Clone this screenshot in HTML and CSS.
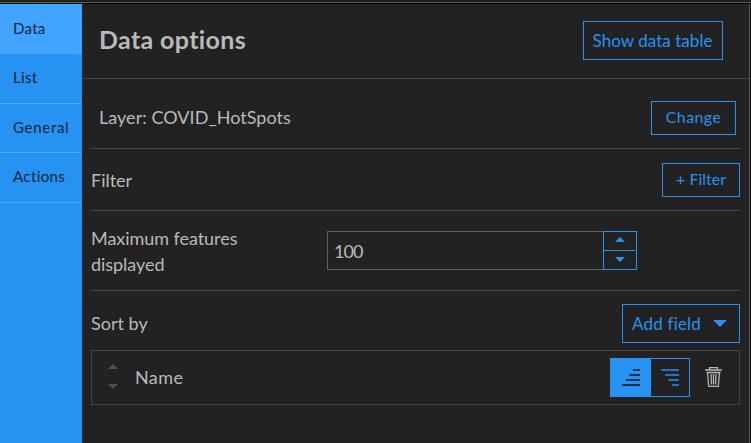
FILE: index.html
```
<!DOCTYPE html>
<html lang="en">
<head>
<meta charset="utf-8">
<title>Data options</title>
<link rel="stylesheet" href="styles.css">
</head>
<body>
<div class="window">
  <nav class="tabs">
    <a class="tab active">Data</a>
    <a class="tab">List</a>
    <a class="tab general">General</a>
    <a class="tab actions">Actions</a>
  </nav>
  <main class="panel">
    <header class="header">
      <h1 class="title">Data options</h1>
      <button class="btn show"><span>Show data table</span></button>
    </header>
    <div class="content">
      <section class="row layer">
        <span class="layer-name">Layer: COVID_HotSpots</span>
        <button class="btn change"><span>Change</span></button>
      </section>
      <section class="row filter">
        <span class="filter-label">Filter</span>
        <button class="btn add-filter"><span>+ Filter</span></button>
      </section>
      <section class="row maximum">
        <label class="max-label">Maximum features<br>displayed</label>
        <div class="number">
          <span class="value">100</span>
          <div class="spinner">
            <div class="step up"><svg width="10" height="5" viewBox="0 0 10 5"><path d="M0 5 5 0l5 5z"/></svg></div>
            <div class="step"><svg width="10" height="5" viewBox="0 0 10 5"><path d="M0 0h10L5 5z"/></svg></div>
          </div>
        </div>
      </section>
      <section class="sort">
        <span class="sort-label">Sort by</span>
        <button class="btn add-field"><span>Add field</span><svg width="14" height="7" viewBox="0 0 14 7"><path d="M0 0h14L7 7z"/></svg></button>
      </section>
      <div class="field">
        <div class="mover">
          <svg width="10" height="5" viewBox="0 0 10 5"><path d="M0 5 5 0l5 5z"/></svg>
          <svg width="10" height="5" viewBox="0 0 10 5"><path d="M0 0h10L5 5z"/></svg>
        </div>
        <span class="field-name">Name</span>
        <div class="order">
          <div class="asc"><svg width="18" height="17" viewBox="0 0 18 17"><path d="M11 0h7v2h-7zM7.500 5H18v2H7.500zM4 10h14v2H4zM0 15h18v2H0z"/></svg></div>
          <div class="desc"><svg width="18" height="17" viewBox="0 0 18 17"><path d="M0 0h18v2H0zM4 5h14v2H4zM7.500 10H18v2H7.500zM11 15h7v2h-7z"/></svg></div>
        </div>
        <svg class="trash" width="17" height="20" viewBox="0 0 17 20"><path d="M4.500 3V.7h8V3M0 3h17M1.500 5.500h14M2.500 5.500l1.200 13.800h9.600l1.200-13.800M6 7l.5 10.500M8.500 7v10.500M11 7l-.5 10.500"/></svg>
      </div>
    </div>
  </main>
</div>
</body>
</html>
```
FILE: styles.css
```
* { box-sizing: border-box; }
body {
  margin: 0;
  height: 443px;
  overflow: hidden;
  background: #202020;
  color: #bababa;
  font: 18px/26px Lato, "Liberation Sans", sans-serif;
}
svg { display: block; fill: currentColor; }
.window {
  display: flex;
  height: 443px;
  padding-top: 1px;
  border-top: 3px solid #000;
  border-image: linear-gradient(#202020 0 2px, #5a5a5a 2px 3px) 3;
  border-width: 3px 0 0;
  background: linear-gradient(#000 0 1px, #222 1px);
}
.tabs { width: 82px; background: #2692f1; color: #0b2438; font-size: 15px; letter-spacing: 0.3px; }
.tab {
  display: flex;
  align-items: center;
  height: 49px;
  padding: 0 0 2px 13px;
  border-bottom: 1px solid #46a8ff;
}
.tab.active { height: 50px; background: #41a5ff; }
.tab:nth-child(2), .tab:nth-child(4) { height: 50px; }
.tab:nth-child(2) { padding-bottom: 3px; }
.general { letter-spacing: 0.7px; }
.actions { padding-bottom: 3px; letter-spacing: 0.4px; }
.panel { flex: 1; border-right: 1px solid #5a5a5a; margin-right: 1px; box-shadow: 1px 0 #0b0b0b; }
.header {
  display: flex;
  justify-content: space-between;
  align-items: center;
  height: 75px;
  padding: 0 26px 2px 17px;
  border-bottom: 1px solid #444;
}
.title { margin: 0; padding-bottom: 3px; font-size: 25px; line-height: 32px; letter-spacing: 0.36px; }
.btn {
  display: flex;
  align-items: center;
  justify-content: center;
  padding: 0;
  border: 1px solid #2692f1;
  background: transparent;
  color: #2692f1;
  font: 16px/22px Lato, "Liberation Sans", sans-serif;
}
.show { width: 140px; height: 39px; padding: 2px 1px 0 0; font-size: 17px; letter-spacing: 0.05px; }
.change { width: 85px; height: 34px; padding-bottom: 1px; letter-spacing: 0.4px; }
.add-filter { width: 78px; height: 34px; padding-bottom: 1px; }
.content { padding: 0 9px; }
.row { display: flex; align-items: center; justify-content: space-between; border-bottom: 1px solid #484848; }
.layer { height: 70px; padding: 8px 4px 0 8px; }
.layer-name { letter-spacing: 0.04px; }
.filter { height: 62px; }
.layer-name, .field-name { padding-bottom: 1px; }
.maximum { height: 80px; justify-content: flex-start; }
.max-label { width: 236px; letter-spacing: -0.05px; }
.number { display: flex; width: 310px; height: 39px; border: 1px solid #5f5f5f; border-right: 0; }
.value { flex: 1; padding: 6px 0 0 6px; letter-spacing: -0.9px; }
.spinner { width: 34px; margin: -1px 0; border: 1px solid #2692f1; color: #2692f1; }
.step { display: flex; justify-content: center; align-items: center; height: 18px; }
.step.up { height: 19px; margin-right: 1px; padding-bottom: 3px; border-bottom: 1px solid #2692f1; }
.step:last-child { padding-bottom: 1px; }
.sort { display: flex; align-items: flex-start; justify-content: space-between; height: 59px; padding-top: 13px; }
.sort-label { padding-top: 6px; }
.add-field { width: 118px; height: 39px; gap: 12px; padding: 1px 3px 0 0; font-size: 17px; letter-spacing: 0.2px; }
.add-field svg { margin-top: -2px; }
.field { display: flex; align-items: center; height: 55px; border: 1px solid #444; }
.mover { display: flex; flex-direction: column; gap: 15px; margin: -3px 17px 0 16px; color: #505050; }
.field-name { flex: 1; letter-spacing: 0.4px; }
.order { display: flex; width: 80px; height: 39px; border: 1px solid #2692f1; margin-right: 15px; }
.asc, .desc { display: flex; align-items: center; justify-content: center; }
.asc { width: 40px; padding-right: 1px; background: #2692f1; color: #0c2d4b; }
.desc { width: 38px; color: #1f75c2; }
.trash { margin: 0 17px 2px 0; fill: none; stroke: #b5b5b5; stroke-width: 1.3; }
```
